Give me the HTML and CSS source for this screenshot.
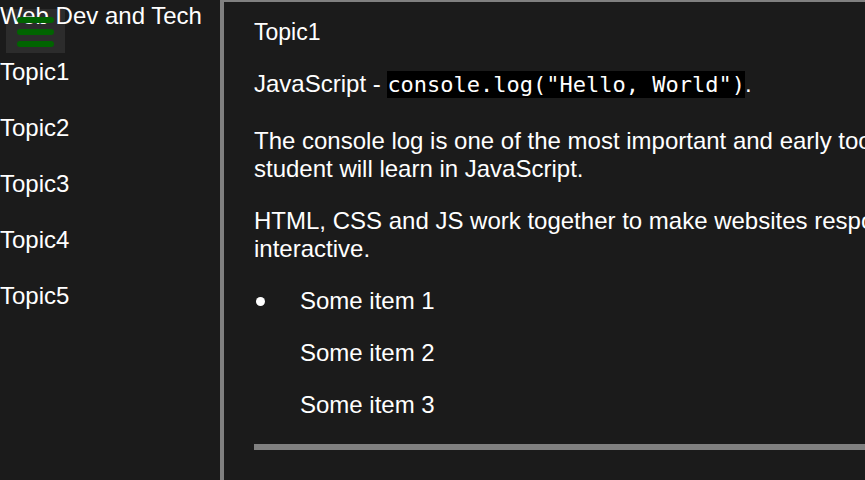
FILE: index.html
```html
<!DOCTYPE html>
<html>
<head>
<meta charset="utf-8">
<link rel="stylesheet" href="styles.css">
</head>
<body>
<div class="page">
  <nav class="sidebar">
    <button class="menu-btn" aria-label="menu">
      <span class="bar"></span><span class="bar"></span><span class="bar"></span>
    </button>
    <div class="site-title">Web Dev and Tech</div>
    <a class="topic">Topic1</a>
    <a class="topic">Topic2</a>
    <a class="topic">Topic3</a>
    <a class="topic">Topic4</a>
    <a class="topic">Topic5</a>
  </nav>
  <main class="main">
    <div class="content">
      <h2 class="heading">Topic1</h2>
      <p class="para js-line">JavaScript - <code class="code">console.log("Hello, World")</code>.</p>
      <p class="para">The console log is one of the most important and early tools a student will learn in JavaScript.</p>
      <p class="para">HTML, CSS and JS work together to make websites responsive and interactive.</p>
      <ul class="items">
        <li class="item"><span class="marker"><span class="dot"></span></span>Some item 1</li>
        <li class="item"><span class="marker"></span>Some item 2</li>
        <li class="item"><span class="marker"></span>Some item 3</li>
      </ul>
      <div class="rule"></div>
    </div>
  </main>
</div>
</body>
</html>
```
FILE: styles.css
```css
html, body {
  margin: 0;
  padding: 0;
  background: #1b1b1b;
  overflow: hidden;
}
body {
  font-family: "Liberation Sans", Arial, sans-serif;
  color: #ffffff;
  width: 865px;
  height: 480px;
}
.page {
  display: flex;
  height: 480px;
}
.sidebar {
  position: relative;
  flex: 0 0 220px;
  display: flex;
  flex-direction: column;
  gap: 24px;
}
.menu-btn {
  position: absolute;
  left: 6px;
  top: 9px;
  width: 59px;
  height: 44px;
  padding: 8px 0 0 11px;
  box-sizing: border-box;
  border: none;
  background: rgba(255, 255, 255, 0.08);
  display: flex;
  flex-direction: column;
  gap: 6px;
}
.bar {
  display: block;
  width: 37px;
  height: 6px;
  border-radius: 3px;
  background: #006400;
}
.site-title {
  font-size: 24px;
  line-height: 32px;
}
.topic {
  font-size: 24px;
  line-height: 32px;
  color: #ffffff;
}
.main {
  flex: 0 0 auto;
  border-left: 4px solid #808080;
  border-top: 2px solid #808080;
  padding: 0 0 0 30px;
}
.content {
  width: 735px;
  padding-top: 18px;
}
.heading {
  font-size: 23px;
  font-weight: normal;
  line-height: 25px;
  margin: 0 0 25px 0;
}
.para {
  font-size: 24px;
  line-height: 28px;
  margin: 0 0 24px 0;
}
.js-line {
  margin-bottom: 28px;
}
.code {
  font-family: "DejaVu Sans Mono", "Liberation Mono", monospace;
  font-size: 22px;
  background: #000000;
  padding: 1px 0;
}
.items {
  list-style: none;
  margin: 22px 0 0 0;
  padding: 0;
}
.item {
  display: flex;
  font-size: 24px;
  line-height: 28px;
  margin-bottom: 24px;
}
.item:last-child {
  margin-bottom: 25px;
}
.marker {
  flex: 0 0 46px;
  display: flex;
  align-items: center;
  padding-left: 2px;
  box-sizing: border-box;
}
.dot {
  width: 9px;
  height: 9px;
  border-radius: 50%;
  background: #ffffff;
}
.rule {
  height: 6px;
  background: #808080;
  margin-right: -200px;
}
```
